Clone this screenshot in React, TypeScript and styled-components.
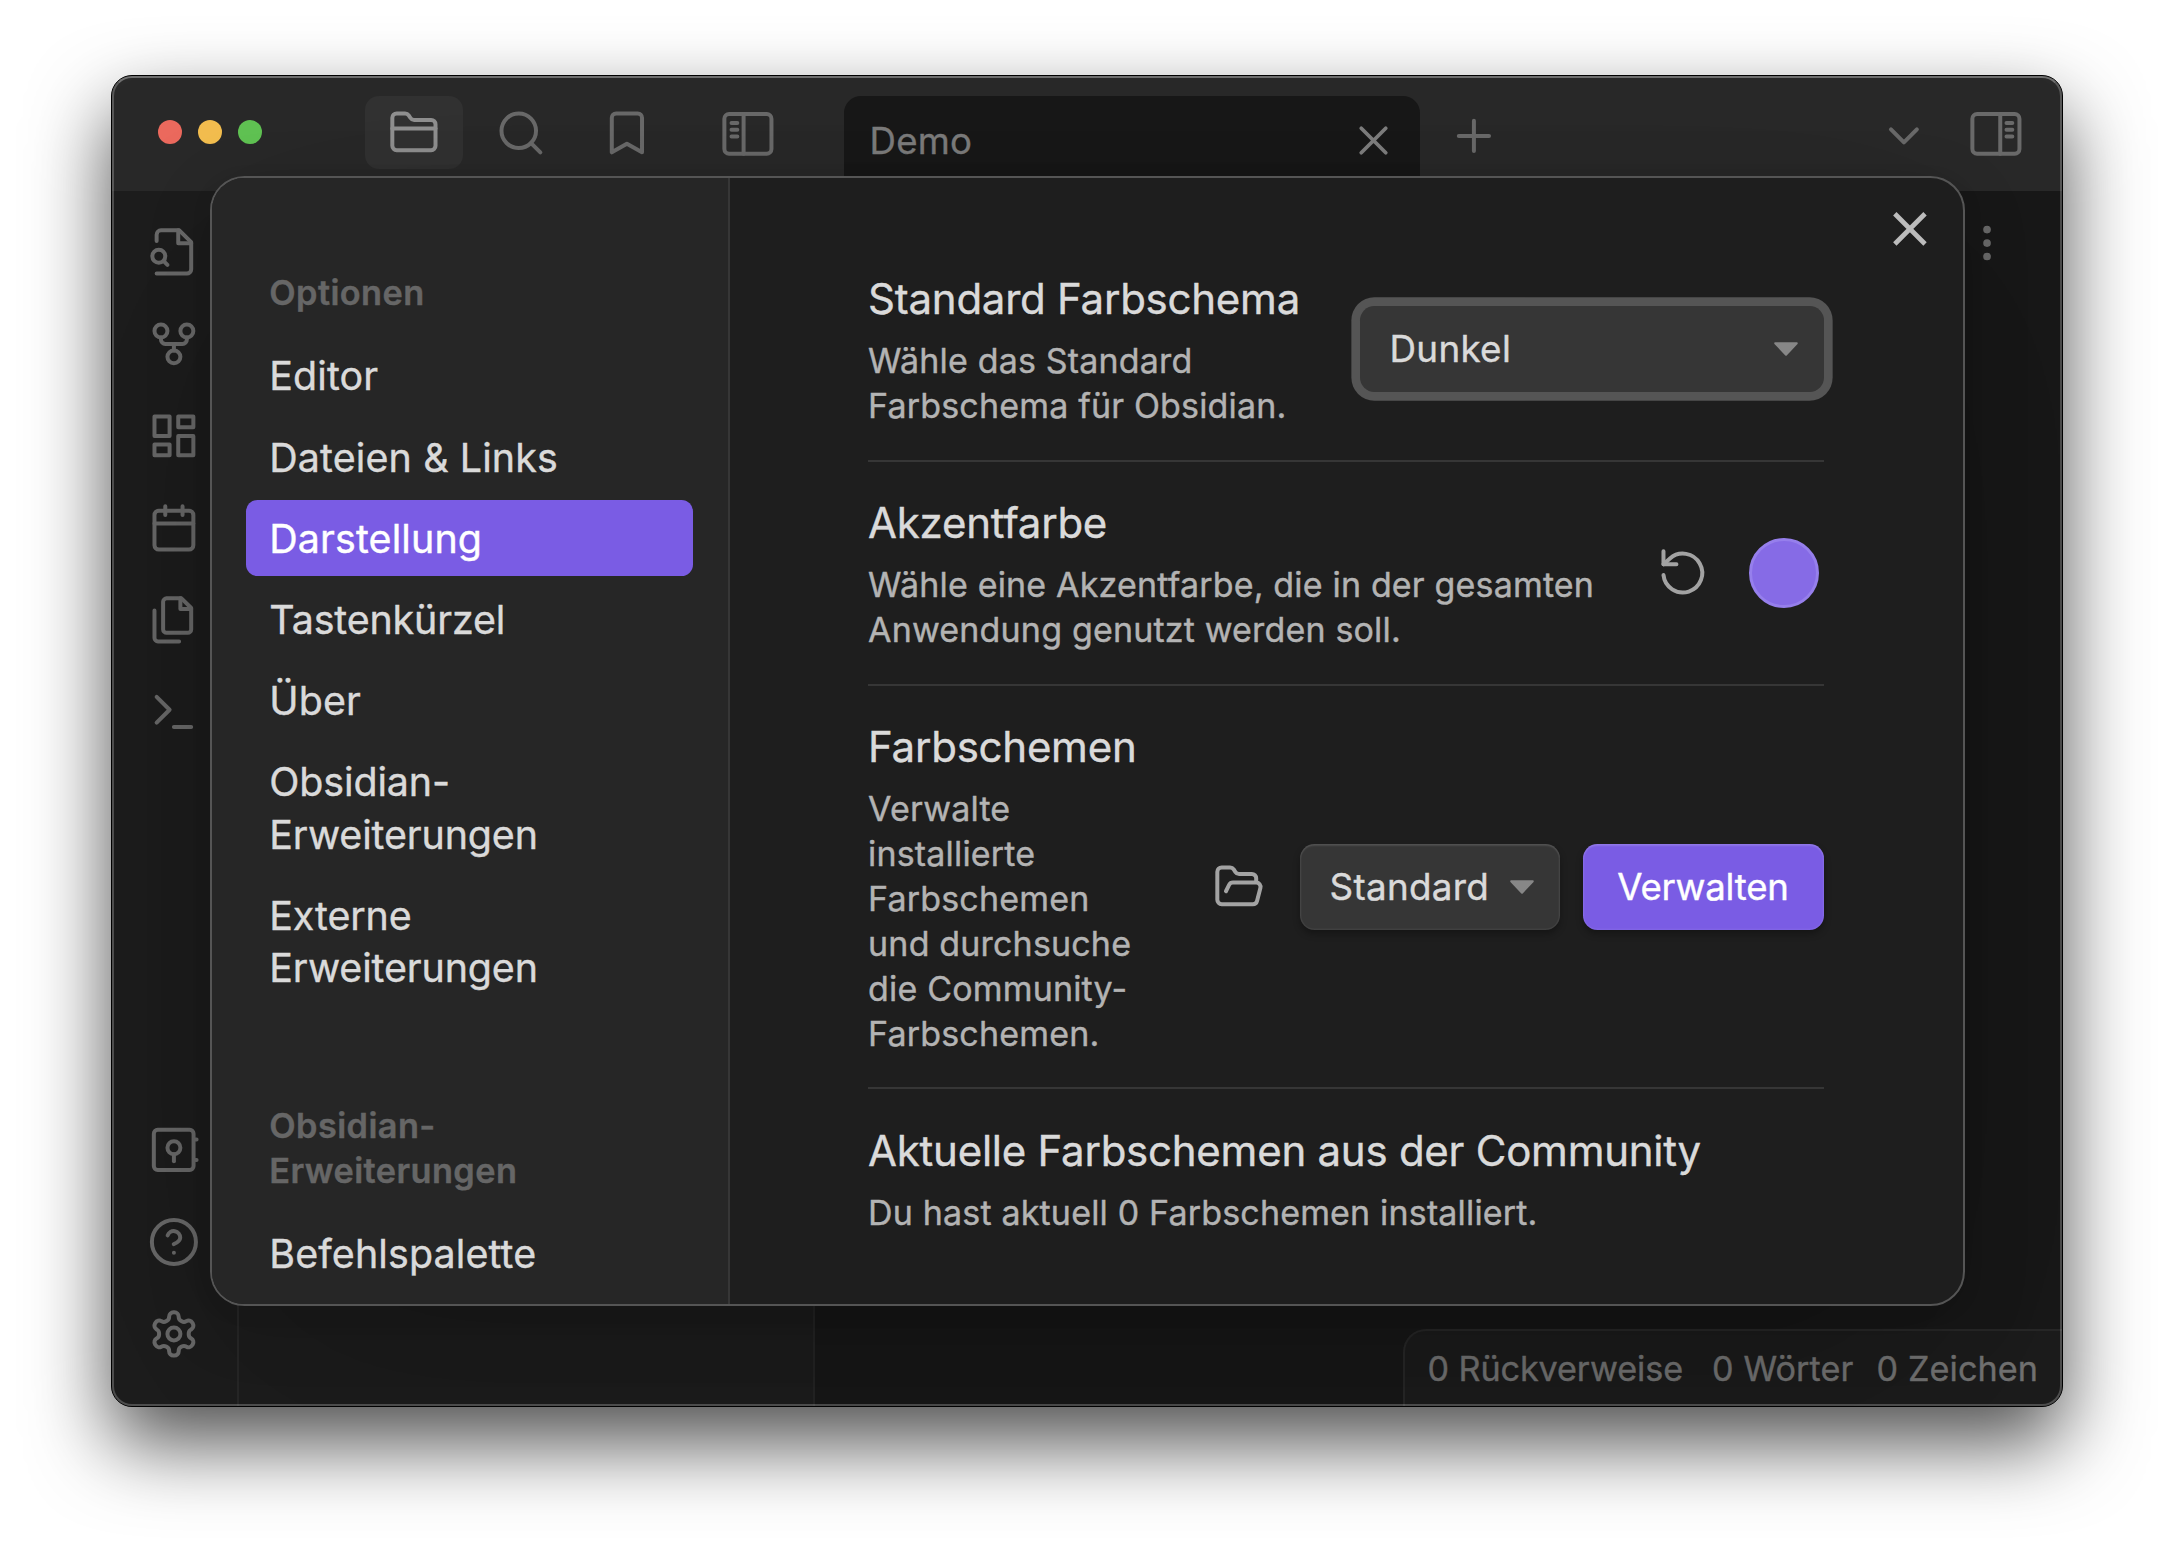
import React from "react";
import styled, { createGlobalStyle } from "styled-components";

const GlobalStyle = createGlobalStyle`
  * { box-sizing: border-box; }
  body {
    margin: 0;
    background: #fff;
    font-family: Inter, "Liberation Sans", sans-serif;
    font-weight: 400;
    -webkit-font-smoothing: antialiased;
    -webkit-text-stroke: 0.4px currentColor;
  }
  button { font: inherit; border: 0; padding: 0; margin: 0; background: none; }
`;

/* ---------- icons ---------- */

const Svg = styled.svg<{ $size?: number; $color?: string; $stroke?: number }>`
  display: block;
  flex: none;
  width: ${(p) => p.$size ?? 51.84}px;
  height: ${(p) => p.$size ?? 51.84}px;
  fill: none;
  stroke: ${(p) => p.$color ?? "#6b6b6b"};
  stroke-width: ${(p) => p.$stroke ?? 1.85};
  stroke-linecap: round;
  stroke-linejoin: round;
  overflow: visible;
`;

type IconProps = {
  children: React.ReactNode;
  size?: number;
  color?: string;
  stroke?: number;
};

const Icon = ({ children, size, color, stroke }: IconProps) => (
  <Svg viewBox="0 0 24 24" $size={size} $color={color} $stroke={stroke}>
    {children}
  </Svg>
);

const shapes = {
  folder: (
    <>
      <path d="M4 20h16a2 2 0 0 0 2-2V8a2 2 0 0 0-2-2h-7.93a2 2 0 0 1-1.66-.9l-.82-1.2A2 2 0 0 0 7.93 3H4a2 2 0 0 0-2 2v13c0 1.1.9 2 2 2Z" />
      <path d="M2 10h20" />
    </>
  ),
  search: (
    <>
      <circle cx="11" cy="11" r="8" />
      <path d="m21 21-4.3-4.3" />
    </>
  ),
  bookmark: <path d="m19 21-7-4-7 4V5a2 2 0 0 1 2-2h10a2 2 0 0 1 2 2v16z" />,
  sidebarLeft: (
    <>
      <rect x="1.1" y="2.8" width="21.8" height="18.4" rx="2.2" />
      <path d="M10 2.8v18.4" />
      <path d="M4.4 7h2.7M4.4 10.1h2.7M4.4 13.2h2.7" />
    </>
  ),
  sidebarRight: (
    <>
      <rect x="1.1" y="2.8" width="21.8" height="18.4" rx="2.2" />
      <path d="M14 2.8v18.4" />
      <path d="M16.9 7h2.7M16.9 10.1h2.7M16.9 13.2h2.7" />
    </>
  ),
  plus: <path d="M5 12h14M12 5v14" />,
  close: <path d="M18 6 6 18M6 6l12 12" />,
  chevronDown: <path d="m6 9 6 6 6-6" />,
  more: (
    <>
      <circle cx="12" cy="5" r="1" />
      <circle cx="12" cy="12" r="1" />
      <circle cx="12" cy="19" r="1" />
    </>
  ),
  fileSearch: (
    <>
      <path d="M4 22h14a2 2 0 0 0 2-2V7.5L14.5 2H6a2 2 0 0 0-2 2v3" />
      <path d="M14 2v6h6" />
      <path d="M5 17a3 3 0 1 0 0-6 3 3 0 0 0 0 6z" />
      <path d="m9 18-1.5-1.5" />
    </>
  ),
  fork: (
    <>
      <circle cx="12" cy="18" r="3" />
      <circle cx="6" cy="6" r="3" />
      <circle cx="18" cy="6" r="3" />
      <path d="M18 9v1a2 2 0 0 1-2 2H8a2 2 0 0 1-2-2V9" />
      <path d="M12 12v3" />
    </>
  ),
  dashboard: (
    <>
      <rect x="3" y="3" width="7" height="9" />
      <rect x="14" y="3" width="7" height="5" />
      <rect x="14" y="12" width="7" height="9" />
      <rect x="3" y="16" width="7" height="5" />
    </>
  ),
  calendar: (
    <>
      <rect x="3" y="4" width="18" height="18" rx="2" />
      <path d="M16 2v4M8 2v4M3 10h18" />
    </>
  ),
  files: (
    <>
      <path d="M15.5 2H8.6c-.4 0-.8.2-1.1.5-.3.3-.5.7-.5 1.1v12.8c0 .4.2.8.5 1.1.3.3.7.5 1.1.5h9.8c.4 0 .8-.2 1.1-.5.3-.3.5-.7.5-1.1V6.5L15.5 2z" />
      <path d="M3 7.6v12.8c0 .4.2.8.5 1.1.3.3.7.5 1.1.5h9.8" />
      <path d="M15 2v5h5" />
    </>
  ),
  terminal: <path d="m4 17 6-6-6-6M12 19h8" />,
  vault: (
    <>
      <rect x="2.7" y="2.7" width="18.4" height="18.6" rx="1.8" />
      <circle cx="12" cy="11" r="3" />
      <path d="M12 14v3.2" />
      <path d="M22 7.2h.5M22 16.7h.5" />
    </>
  ),
  help: (
    <>
      <circle cx="12" cy="12" r="10.2" />
      <path d="M9.09 9a3 3 0 0 1 5.83 1c0 2-3 3-3 3M12 17h.01" />
    </>
  ),
  settings: (
    <>
      <path d="M12.22 2h-.44a2 2 0 0 0-2 2v.18a2 2 0 0 1-1 1.73l-.43.25a2 2 0 0 1-2 0l-.15-.08a2 2 0 0 0-2.73.73l-.22.38a2 2 0 0 0 .73 2.73l.15.1a2 2 0 0 1 1 1.72v.51a2 2 0 0 1-1 1.74l-.15.09a2 2 0 0 0-.73 2.73l.22.38a2 2 0 0 0 2.73.73l.15-.08a2 2 0 0 1 2 0l.43.25a2 2 0 0 1 1 1.73V20a2 2 0 0 0 2 2h.44a2 2 0 0 0 2-2v-.18a2 2 0 0 1 1-1.73l.43-.25a2 2 0 0 1 2 0l.15.08a2 2 0 0 0 2.73-.73l.22-.39a2 2 0 0 0-.73-2.73l-.15-.08a2 2 0 0 1-1-1.74v-.5a2 2 0 0 1 1-1.74l.15-.09a2 2 0 0 0 .73-2.73l-.22-.38a2 2 0 0 0-2.73-.73l-.15.08a2 2 0 0 1-2 0l-.43-.25a2 2 0 0 1-1-1.73V4a2 2 0 0 0-2-2z" />
      <circle cx="12" cy="12" r="3" />
    </>
  ),
  reset: (
    <>
      <path d="M3 2v6h6" />
      <path d="M3 13a9 9 0 1 0 3-7.7L3 8" />
    </>
  ),
  folderOpen: (
    <path d="m6 14 1.45-2.9A2 2 0 0 1 9.24 10H20a2 2 0 0 1 1.94 2.5l-1.55 6a2 2 0 0 1-1.94 1.5H4a2 2 0 0 1-2-2V5c0-1.1.9-2 2-2h3.93a2 2 0 0 1 1.66.9l.82 1.2a2 2 0 0 0 1.66.9H18a2 2 0 0 1 2 2v2" />
  ),
};

/* ---------- window frame ---------- */

const Desktop = styled.div`
  width: 2174px;
  height: 1554px;
  padding: 75px 111px 147px;
  overflow: hidden;
`;

const Window = styled.div`
  position: relative;
  display: flex;
  flex-direction: column;
  width: 1952px;
  height: 1332px;
  border: 1px solid #000;
  border-radius: 21px;
  background: #181818;
  box-shadow: 0 36px 80px rgba(0, 0, 0, 0.69);

  &::after {
    content: "";
    position: absolute;
    inset: 0;
    border: 2px solid rgba(255, 255, 255, 0.22);
    border-top-color: rgba(255, 255, 255, 0.33);
    border-radius: 20px;
    pointer-events: none;
  }
`;

const TitleBar = styled.header`
  display: flex;
  align-items: center;
  height: 115px;
  flex: none;
  padding-left: 46px;
  background: #292929;
  border-radius: 20px 20px 0 0;
`;

const TrafficLights = styled.div`
  display: flex;
  gap: 16px;
  width: 207px;
  padding-bottom: 3px;
`;

const Light = styled.span<{ $color: string }>`
  width: 24px;
  height: 24px;
  border-radius: 50%;
  background: ${(p) => p.$color};
`;

const ToolGroup = styled.div`
  display: flex;
  gap: 8.64px;
  padding-bottom: 2px;
`;

const ToolButton = styled.button<{ $active?: boolean }>`
  display: grid;
  place-items: center;
  width: 98px;
  height: 73px;
  border-radius: 14px;
  background: ${(p) => (p.$active ? "#323232" : "transparent")};
`;

const PlainButton = styled.button<{ $ml?: number; $drop?: number }>`
  display: block;
  margin-left: ${(p) => p.$ml ?? 0}px;
  padding-top: ${(p) => p.$drop ?? 0}px;
`;

const Tab = styled.div`
  display: flex;
  align-items: center;
  justify-content: space-between;
  align-self: flex-end;
  width: 576px;
  height: 95px;
  margin-left: 70px;
  padding: 0 22px 6px 25.5px;
  border-radius: 17px 17px 0 0;
  background: #181818;
  color: #7e7e7e;
  font-size: 36.6px;
  letter-spacing: 0.25px;
`;

const Spacer = styled.div`
  flex: 1;
`;

/* ---------- workspace ---------- */

const Workspace = styled.div`
  display: flex;
  flex: 1;
  min-height: 0;
  border-radius: 0 0 20px 20px;
  overflow: hidden;
`;

const Ribbon = styled.nav`
  display: flex;
  flex-direction: column;
  align-items: center;
  gap: 40.32px;
  width: 127px;
  flex: none;
  padding: 34.6px 1.2px 46px 0;
  border-right: 2px solid #282828;
  background: #1d1d1d;
`;

const LeftPane = styled.aside`
  width: 576px;
  flex: none;
  border-right: 2px solid #252525;
  background: #1d1d1d;
`;

const MainPane = styled.main`
  display: flex;
  flex: 1;
  flex-direction: column;
  justify-content: space-between;
  align-items: flex-end;
  background: #181818;
`;

const ViewHeader = styled.div`
  padding: 29px 52px 0 0;
`;

const StatusBar = styled.footer`
  display: grid;
  grid-template-columns: 284.5px 164.5px 1fr;
  align-items: center;
  width: 659px;
  height: 77px;
  padding-left: 22.5px;
  border-top: 2px solid #282828;
  border-left: 2px solid #282828;
  border-top-left-radius: 23px;
  background: #1c1c1c;
  color: #747474;
  font-size: 34.2px;
  letter-spacing: 0.1px;
  white-space: nowrap;

  span:first-child {
    letter-spacing: -0.1px;
  }
`;

/* ---------- settings modal ---------- */

const Overlay = styled.div`
  position: absolute;
  inset: 0;
  display: grid;
  place-items: center;
  border-radius: 20px;
  overflow: hidden;
`;

const Modal = styled.section`
  position: relative;
  display: flex;
  width: 1755px;
  height: 1130px;
  border: 2px solid #555;
  border-radius: 34.56px;
  background: #1e1e1e;
  box-shadow:
    0 5px 21px rgba(0, 0, 0, 0.071),
    0 18px 71px rgba(0, 0, 0, 0.112),
    0 86px 259px rgba(0, 0, 0, 0.2);
`;

const CloseButton = styled.button`
  position: absolute;
  top: 25px;
  right: 26.6px;

  svg {
    stroke-linecap: butt;
  }
`;

const Sidebar = styled.nav`
  width: 518px;
  flex: none;
  padding: 92px 35px 0 34.3px;
  border-right: 2px solid #363636;
  border-radius: 32px 0 0 32px;
  background: #262626;
  overflow: hidden;
`;

const NavGroup = styled.div`
  display: flex;
  flex-direction: column;
  gap: 5.76px;

  & + & {
    margin-top: 97.7px;
  }
`;

const NavTitle = styled.div`
  padding: 1px 22.6px 0 23.5px;
  margin-bottom: 16.4px;
  color: #666;
  font-size: 34.3px;
  font-weight: 600;
  line-height: 44.93px;
  letter-spacing: 0.42px;
`;

const NavItem = styled.div<{ $active?: boolean; $tracking?: number }>`
  padding: 12.3px 22.6px 10.74px 23.5px;
  border-radius: 11.5px;
  background: ${(p) => (p.$active ? "#7a5ce4" : "transparent")};
  color: ${(p) => (p.$active ? "#fff" : "#dadada")};
  font-size: 39.4px;
  line-height: 52.4px;
  letter-spacing: ${(p) => p.$tracking ?? 0.12}px;
`;

const Content = styled.div`
  flex: 1;
  padding: 91.9px 139px 0 138px;
`;

const Setting = styled.div`
  display: flex;
  align-items: center;
  justify-content: space-between;
  padding: 32.25px 0;
  border-top: 2px solid #363636;

  &:first-child {
    padding-top: 0;
    border-top: 0;
  }
`;

const SettingInfo = styled.div<{ $width?: string }>`
  width: ${(p) => p.$width ?? "auto"};
  padding: 0.8px 0 0 0.6px;
`;

const SettingName = styled.div`
  color: #dadada;
  font-size: 42px;
  line-height: 56.16px;
  letter-spacing: -0.25px;
`;

const SettingDesc = styled.div`
  margin: 12.3px 0 -1.6px;
  color: #b3b3b3;
  font-size: 34px;
  line-height: 44.93px;
  letter-spacing: 0.17px;
`;

const Controls = styled.div`
  display: flex;
  align-items: center;
  gap: 23px;
`;

const IconButton = styled.button`
  padding: 0 11.6px 0 12.6px;
`;

const Dropdown = styled.button<{ $width: number; $focused?: boolean }>`
  display: flex;
  align-items: center;
  justify-content: space-between;
  width: ${(p) => p.$width}px;
  height: 86px;
  padding: 0 26px 0 30px;
  border-radius: 14.4px;
  background: #363636;
  color: #dadada;
  font-size: 36.8px;
  letter-spacing: 0.3px;
  box-shadow: ${(p) =>
    p.$focused
      ? "0 0 0 8.64px #555"
      : "inset 0 0 0 1.5px rgba(255,255,255,.05), inset 0 2px 2px rgba(255,255,255,.09), 0 4px 7px rgba(0,0,0,.3)"};
`;

const Arrow = styled.svg`
  width: 24px;
  height: 14px;
  fill: #878787;
  stroke: #878787;
  stroke-width: 2;
  stroke-linejoin: round;
`;

const PrimaryButton = styled.button`
  width: 241px;
  height: 86px;
  border-radius: 14.4px;
  background: #7a5ce4;
  color: #fff;
  font-size: 36.6px;
  letter-spacing: -0.2px;
  box-shadow:
    inset 0 0 0 1.5px rgba(255, 255, 255, 0.05),
    inset 0 2px 2px rgba(255, 255, 255, 0.12),
    0 4px 7px rgba(0, 0, 0, 0.3);
`;

const ColorSwatch = styled.span`
  width: 70px;
  height: 70px;
  margin: 0 4.6px 0 5.2px;
  border: 3px solid #967fec;
  border-radius: 50%;
  background: #866be6;
`;

const DropArrow = () => (
  <Arrow viewBox="0 0 24 14">
    <path d="M1.2 1.2h21.6L12 12.8z" />
  </Arrow>
);

const ribbonTop = [
  shapes.fileSearch,
  shapes.fork,
  shapes.dashboard,
  shapes.calendar,
  shapes.files,
  shapes.terminal,
];
const ribbonBottom = [shapes.vault, shapes.help, shapes.settings];

const options: { label: string; active?: boolean; tracking?: number }[] = [
  { label: "Editor" },
  { label: "Dateien & Links" },
  { label: "Darstellung", active: true },
  { label: "Tastenkürzel", tracking: -0.15 },
  { label: "Über" },
  { label: "Obsidian-Erweiterungen", tracking: -0.12 },
  { label: "Externe Erweiterungen", tracking: -0.12 },
];

export default function App() {
  return (
    <>
      <GlobalStyle />
      <Desktop>
        <Window>
          <TitleBar>
            <TrafficLights>
              <Light $color="#ed6a5e" />
              <Light $color="#f5bf4f" />
              <Light $color="#61c554" />
            </TrafficLights>
            <ToolGroup>
              <ToolButton $active>
                <Icon color="#929292">{shapes.folder}</Icon>
              </ToolButton>
              <ToolButton>
                <Icon>{shapes.search}</Icon>
              </ToolButton>
              <ToolButton>
                <Icon>{shapes.bookmark}</Icon>
              </ToolButton>
            </ToolGroup>
            <PlainButton $ml={46}>
              <Icon>{shapes.sidebarLeft}</Icon>
            </PlainButton>
            <Tab>
              <span>Demo</span>
              <Icon size={49} color="#808080">
                {shapes.close}
              </Icon>
            </Tab>
            <PlainButton $ml={28} $drop={4}>
              <Icon>{shapes.plus}</Icon>
            </PlainButton>
            <Spacer />
            <PlainButton $drop={4}>
              <Icon>{shapes.chevronDown}</Icon>
            </PlainButton>
            <PlainButton $ml={39.8}>
              <Icon>{shapes.sidebarRight}</Icon>
            </PlainButton>
            <PlainButton $ml={40.4} />
          </TitleBar>

          <Workspace>
            <Ribbon>
              {ribbonTop.map((shape, i) => (
                <Icon key={i}>{shape}</Icon>
              ))}
              <Spacer />
              {ribbonBottom.map((shape, i) => (
                <Icon key={i}>{shape}</Icon>
              ))}
            </Ribbon>
            <LeftPane />
            <MainPane>
              <ViewHeader>
                <Icon size={46.08} stroke={2}>
                  {shapes.more}
                </Icon>
              </ViewHeader>
              <StatusBar>
                <span>0 Rückverweise</span>
                <span>0 Wörter</span>
                <span>0 Zeichen</span>
              </StatusBar>
            </MainPane>
          </Workspace>

          <Overlay>
            <Modal>
              <Sidebar>
                <NavGroup>
                  <NavTitle>Optionen</NavTitle>
                  {options.map((item) => (
                    <NavItem
                      key={item.label}
                      $active={item.active}
                      $tracking={item.tracking}
                    >
                      {item.label}
                    </NavItem>
                  ))}
                </NavGroup>
                <NavGroup>
                  <NavTitle>Obsidian-Erweiterungen</NavTitle>
                  <NavItem>Befehlspalette</NavItem>
                </NavGroup>
              </Sidebar>

              <Content>
                <Setting>
                  <SettingInfo $width="460px">
                    <SettingName>Standard Farbschema</SettingName>
                    <SettingDesc>
                      Wähle das Standard Farbschema für Obsidian.
                    </SettingDesc>
                  </SettingInfo>
                  <Controls>
                    <Dropdown $width={464} $focused>
                      Dunkel
                      <DropArrow />
                    </Dropdown>
                  </Controls>
                </Setting>

                <Setting>
                  <SettingInfo $width="750px">
                    <SettingName>Akzentfarbe</SettingName>
                    <SettingDesc>
                      Wähle eine Akzentfarbe, die in der gesamten Anwendung
                      genutzt werden soll.
                    </SettingDesc>
                  </SettingInfo>
                  <Controls>
                    <IconButton>
                      <Icon color="#a3a3a3">{shapes.reset}</Icon>
                    </IconButton>
                    <ColorSwatch />
                  </Controls>
                </Setting>

                <Setting>
                  <SettingInfo $width="290px">
                    <SettingName>Farbschemen</SettingName>
                    <SettingDesc>
                      Verwalte installierte Farbschemen und durchsuche die
                      Community-Farbschemen.
                    </SettingDesc>
                  </SettingInfo>
                  <Controls>
                    <IconButton>
                      <Icon color="#a3a3a3">{shapes.folderOpen}</Icon>
                    </IconButton>
                    <Dropdown $width={260}>
                      Standard
                      <DropArrow />
                    </Dropdown>
                    <PrimaryButton>Verwalten</PrimaryButton>
                  </Controls>
                </Setting>

                <Setting>
                  <SettingInfo>
                    <SettingName>
                      Aktuelle Farbschemen aus der Community
                    </SettingName>
                    <SettingDesc>
                      Du hast aktuell 0 Farbschemen installiert.
                    </SettingDesc>
                  </SettingInfo>
                </Setting>
              </Content>

              <CloseButton>
                <Icon color="#bcbcbc" stroke={2.2}>
                  <path d="M19 5 5 19M5 5l14 14" />
                </Icon>
              </CloseButton>
            </Modal>
          </Overlay>
        </Window>
      </Desktop>
    </>
  );
}
